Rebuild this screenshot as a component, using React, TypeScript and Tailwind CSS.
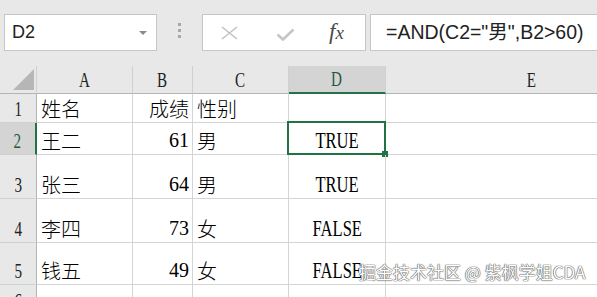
import React from 'react';

const COLS = ['A', 'B', 'C', 'D', 'E'];

type Row = { n: number; h: string; name: string; score: string; sex: string; res: string };

const ROWS: Row[] = [
  { n: 1, h: 'h-[29px]', name: '姓名', score: '成绩', sex: '性别', res: '' },
  { n: 2, h: 'h-[32px]', name: '王二', score: '61', sex: '男', res: 'TRUE' },
  { n: 3, h: 'h-[44px]', name: '张三', score: '64', sex: '男', res: 'TRUE' },
  { n: 4, h: 'h-[44px]', name: '李四', score: '73', sex: '女', res: 'FALSE' },
  { n: 5, h: 'h-[42px]', name: '钱五', score: '49', sex: '女', res: 'FALSE' },
  { n: 6, h: 'h-[30px]', name: '', score: '', sex: '', res: '' },
];

const colW: Record<string, string> = {
  A: 'w-[96px]',
  B: 'w-[60px]',
  C: 'w-[96px]',
  D: 'w-[97px]',
  E: 'w-[292px]',
};

const cjk = "font-['Noto_Sans_CJK_SC',sans-serif] font-light text-[20px] leading-none";
const lat = "font-['Liberation_Serif',serif] leading-none";

const FormulaBar: React.FC = () => (
  <div className="h-[66px] bg-[#e8e8e8] flex items-start pt-[14px] pl-[4px]">
    <div className="w-[153px] h-[37px] bg-white border border-[#c6c6c6] flex items-center justify-between pl-[7px] pr-[9px]">
      <span className="font-['Liberation_Sans',sans-serif] text-[18px] text-[#222]">D2</span>
      <svg width="8" height="4" viewBox="0 0 8 4"><path d="M0 0h8L4 4z" fill="#8a8a8a" /></svg>
    </div>
    <div className="w-[45px] h-[37px] flex flex-col items-center pt-[9px] gap-[3px]">
      <div className="w-[3px] h-[3px] bg-[#a8a8a8]" />
      <div className="w-[3px] h-[3px] bg-[#a8a8a8]" />
      <div className="w-[3px] h-[3px] bg-[#a8a8a8]" />
    </div>
    <div className="w-[164px] h-[37px] bg-white border border-[#c6c6c6] flex items-center pl-[18px]">
      <svg width="17" height="14" viewBox="0 0 17 14" className="mr-[38px]">
        <path d="M1 1L16 13M16 1L1 13" stroke="#c2c2c2" strokeWidth="1.6" fill="none" />
      </svg>
      <svg width="19" height="13" viewBox="0 0 19 13" className="mr-[34px] mt-[3px]">
        <path d="M1.5 6.5L7 11.5L17.5 1.5" stroke="#c6c6c6" strokeWidth="2.6" fill="none" />
      </svg>
      <span className="font-['Liberation_Serif',serif] italic text-[23px] text-[#4a4a4a] leading-none -mt-[2px]">
        f<span className="text-[19px]">x</span>
      </span>
    </div>
    <div className="flex-1 ml-[4px] h-[37px] bg-white border border-r-0 border-[#c6c6c6] flex items-center pl-[15px]">
      <span className="font-['Liberation_Sans','Noto_Sans_CJK_SC',sans-serif] text-[19.5px] text-[#222] whitespace-nowrap">
        =AND(C2="男",B2&gt;60)
      </span>
    </div>
  </div>
);

const HeaderRow: React.FC = () => (
  <div className="flex h-[28px] bg-[#e8e8e8]">
    <div className="w-[37px] shrink-0 border-r border-b border-r-[#d0d0d0] border-b-[#b4b4b4] relative">
      <svg width="21" height="21" viewBox="0 0 21 21" className="absolute left-[13px] top-[3px]">
        <path d="M21 0V21H0z" fill="#b6b6b6" />
      </svg>
    </div>
    {COLS.map((c) => (
      <div
        key={c}
        className={`${colW[c]} shrink-0 flex items-end justify-center pb-[2px] border-r border-r-[#d0d0d0] ${
          c === 'D' ? 'bg-[#d4d4d4] border-b-2 border-b-[#217346]' : 'border-b border-b-[#b4b4b4]'
        }`}
      >
        <span className={`${lat} inline-block scale-x-[0.72] text-[21px] ${c === 'D' ? 'text-[#215a3c]' : 'text-[#222]'}`}>
          {c}
        </span>
      </div>
    ))}
  </div>
);

const DataRow: React.FC<{ r: Row }> = ({ r }) => {
  const sel = r.n === 2;
  return (
    <div className={`flex ${r.h}`}>
      <div
        className={`w-[37px] shrink-0 flex items-end justify-center pb-[2px] border-b border-b-[#d0d0d0] ${
          sel ? 'bg-[#d4d4d4] border-r-2 border-r-[#217346]' : 'bg-[#e8e8e8] border-r border-r-[#b4b4b4]'
        }`}
      >
        <span className={`${lat} inline-block scale-x-[0.72] text-[21px] ${sel ? 'text-[#215a3c]' : 'text-[#222]'}`}>
          {r.n}
        </span>
      </div>
      <div className="w-[96px] shrink-0 border-r border-b border-[#d4d4d4] flex items-end pl-[4px] pb-[3px]">
        <span className={`${cjk} text-black`}>{r.name}</span>
      </div>
      <div className="w-[60px] shrink-0 border-r border-b border-[#d4d4d4] flex items-end justify-end pr-[3px] pb-[3px]">
        {r.n === 1 ? (
          <span className={`${cjk} text-black`}>{r.score}</span>
        ) : (
          <span className={`${lat} text-[20px] text-black pb-[1px]`}>{r.score}</span>
        )}
      </div>
      <div className="w-[96px] shrink-0 border-r border-b border-[#d4d4d4] flex items-end pl-[4px] pb-[3px]">
        <span className={`${cjk} text-black`}>{r.sex}</span>
      </div>
      <div className="w-[97px] shrink-0 border-r border-b border-[#d4d4d4] flex items-end justify-center pb-[2px] relative">
        <span className={`${lat} inline-block scale-x-[0.72] text-[23px] text-black`}>{r.res}</span>
        {sel && (
          <div className="absolute -left-[2px] -top-[2px] -right-[1px] -bottom-[1px] border-2 border-[#217346]">
            <div className="absolute -right-[4px] -bottom-[4px] w-[6px] h-[6px] bg-[#217346]" />
          </div>
        )}
      </div>
      <div className="w-[292px] shrink-0 border-r border-b border-[#d4d4d4]" />
    </div>
  );
};

export default function App() {
  return (
    <div className="w-[597px] h-[297px] overflow-hidden bg-white relative">
      <FormulaBar />
      <HeaderRow />
      {ROWS.map((r) => (
        <DataRow key={r.n} r={r} />
      ))}
      <div className="absolute left-[359px] top-[263px] font-['Noto_Sans_CJK_SC',sans-serif] text-[17px] leading-none text-white whitespace-nowrap [text-shadow:0_0_1px_#555,0_0_1px_#555,0_0_1px_#555]">
        掘金技术社区 @ 紫枫学姐CDA
      </div>
    </div>
  );
}
